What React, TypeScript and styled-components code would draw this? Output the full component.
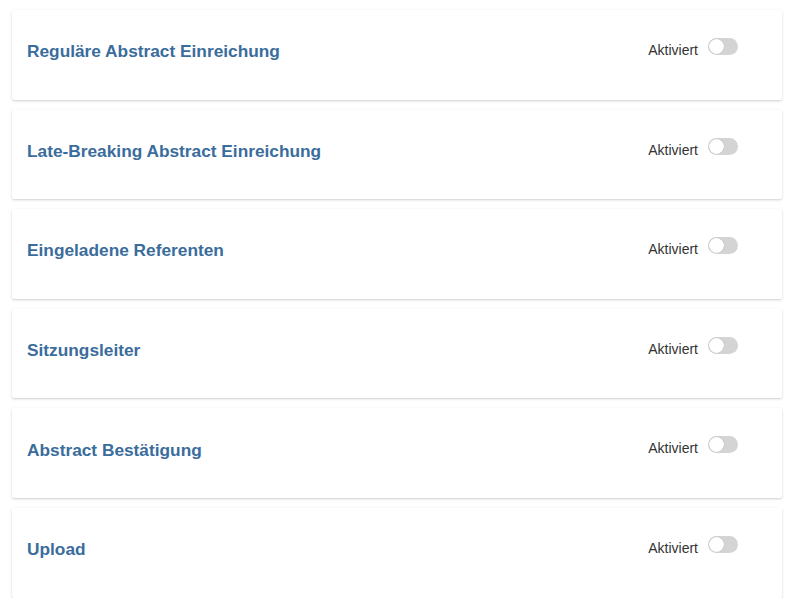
import { useState } from 'react'
import styled, { createGlobalStyle } from 'styled-components'

const GlobalStyle = createGlobalStyle`
  body {
    margin: 0;
    background: #fff;
    font-family: 'Liberation Sans', Arial, Helvetica, sans-serif;
  }
`

const List = styled.div`
  display: flex;
  flex-direction: column;
  gap: 10px;
  padding: 10px 13px 0 12px;
`

const Card = styled.div`
  height: 89.6px;
  box-sizing: border-box;
  background: #fff;
  border-radius: 2px;
  box-shadow: 0 1px 3px rgba(0, 0, 0, 0.16), 0 1px 1px rgba(0, 0, 0, 0.04);
  display: flex;
  justify-content: space-between;
  padding: 0 44px 0 15px;
`

const Title = styled.h3`
  margin: 0;
  align-self: center;
  margin-top: -6px;
  font-size: 17.3px;
  font-weight: 700;
  color: #3a6c9c;
`

const Controls = styled.div`
  display: flex;
  align-items: flex-start;
  gap: 10px;
  padding-top: 28px;
  align-self: flex-start;
`

const Label = styled.span`
  margin-top: 4px;
  font-size: 14px;
  color: #333;
`

const Track = styled.button<{ $on: boolean }>`
  position: relative;
  width: 30px;
  height: 17px;
  border: none;
  padding: 0;
  border-radius: 9px;
  background: ${(p) => (p.$on ? '#3a6c9c' : '#d4d4d4')};
  cursor: pointer;
`

const Knob = styled.span<{ $on: boolean }>`
  position: absolute;
  top: 1px;
  left: ${(p) => (p.$on ? '14px' : '1px')};
  width: 15px;
  height: 15px;
  border-radius: 50%;
  background: #fff;
  box-shadow: 0 0 1px rgba(0, 0, 0, 0.3);
`

const sections = [
  'Reguläre Abstract Einreichung',
  'Late-Breaking Abstract Einreichung',
  'Eingeladene Referenten',
  'Sitzungsleiter',
  'Abstract Bestätigung',
  'Upload',
]

function Section({ title }: { title: string }) {
  const [on, setOn] = useState(false)
  return (
    <Card>
      <Title>{title}</Title>
      <Controls>
        <Label>Aktiviert</Label>
        <Track $on={on} onClick={() => setOn(!on)}>
          <Knob $on={on} />
        </Track>
      </Controls>
    </Card>
  )
}

export default function App() {
  return (
    <>
      <GlobalStyle />
      <List>
        {sections.map((s) => (
          <Section key={s} title={s} />
        ))}
      </List>
    </>
  )
}
